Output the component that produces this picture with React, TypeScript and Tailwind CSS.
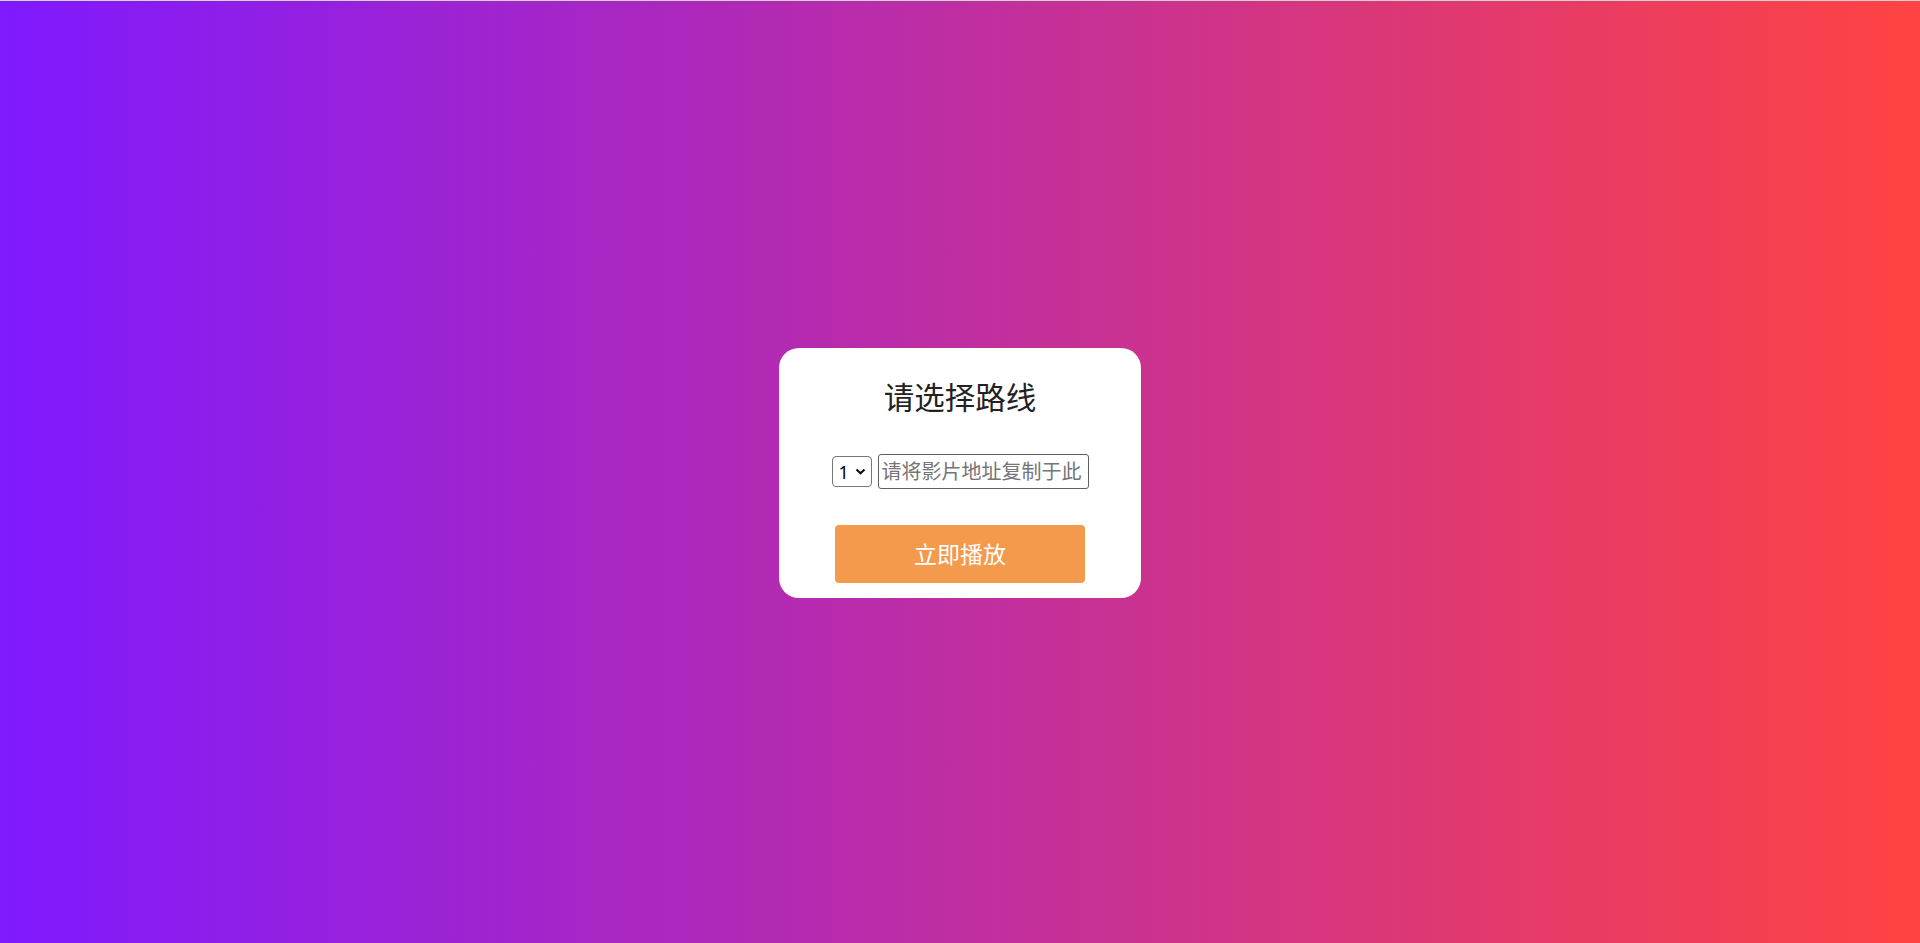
import { useState } from 'react';

export default function App() {
  const [route, setRoute] = useState('1');
  const [url, setUrl] = useState('');

  return (
    <div
      className="min-h-screen w-full flex items-center justify-center border-t border-[#d3d3d3] bg-[linear-gradient(to_right,#7f19ff,#ff4343)]"
      style={{ fontFamily: '"Noto Sans", "Noto Sans CJK SC", sans-serif' }}
    >
      <div className="w-[362px] h-[250px] bg-white rounded-[20px] flex flex-col items-center pt-[29px] mt-[2px]">
        <h2 className="text-[30.5px] leading-[40px] text-[#222] font-normal">请选择路线</h2>

        <div className="flex items-center gap-[6px] mt-[37px]">
          <div className="relative w-[40px] h-[31px]">
            <select
              value={route}
              onChange={(e) => setRoute(e.target.value)}
              className="appearance-none w-full h-full border border-[#767676] rounded-[4px] bg-white pl-[6px] text-[18px] leading-none text-black"
            >
              <option value="1">1</option>
              <option value="2">2</option>
              <option value="3">3</option>
            </select>
            <svg
              className="absolute right-[6px] top-[12px] pointer-events-none"
              width="11"
              height="7"
              viewBox="0 0 11 7"
              fill="none"
            >
              <path d="M1.5 1.5 L5.5 5.2 L9.5 1.5" stroke="#111" strokeWidth="2.2" />
            </svg>
          </div>
          <input
            value={url}
            onChange={(e) => setUrl(e.target.value)}
            placeholder="请将影片地址复制于此"
            className="w-[211px] h-[35px] border border-[#5f5f5f] rounded-[3px] px-[3px] text-[20px] text-black placeholder:text-[#757575] outline-none"
          />
        </div>

        <button
          type="button"
          className="mt-[36px] w-[250px] h-[58px] rounded-[4px] bg-[#f39a4d] text-white text-[23px] leading-none"
        >
          立即播放
        </button>
      </div>
    </div>
  );
}
